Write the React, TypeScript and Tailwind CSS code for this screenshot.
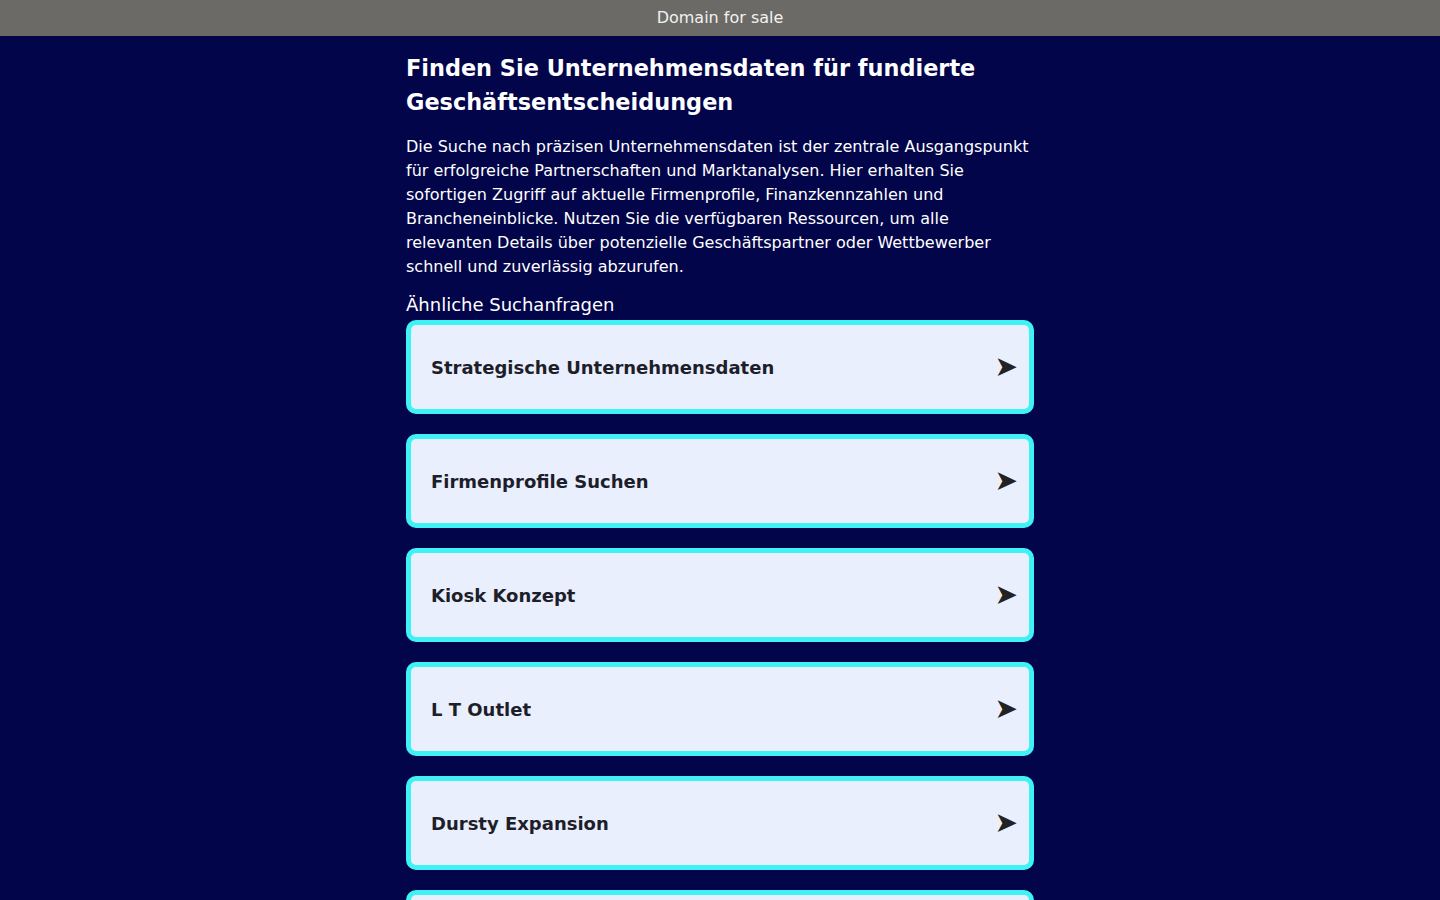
import React from "react";

const items = [
  "Strategische Unternehmensdaten",
  "Firmenprofile Suchen",
  "Kiosk Konzept",
  "L T Outlet",
  "Dursty Expansion",
  "Unternehmensanalyse",
];

export default function App() {
  return (
    <div className="min-h-screen bg-[#02054a] text-white" style={{ fontFamily: '"DejaVu Sans", sans-serif' }}>
      <div className="h-9 bg-[#6b6a66] flex items-center justify-center text-base text-[#f2f2f2]">
        Domain for sale
      </div>
      <div className="w-[628px] mx-auto pt-[15px]">
        <h1 className="text-[22.4px] font-bold leading-[34px]">
          Finden Sie Unternehmensdaten für fundierte Geschäftsentscheidungen
        </h1>
        <p className="mt-[16px] text-base leading-6">
          Die Suche nach präzisen Unternehmensdaten ist der zentrale Ausgangspunkt für erfolgreiche Partnerschaften und Marktanalysen. Hier erhalten Sie sofortigen Zugriff auf aktuelle Firmenprofile, Finanzkennzahlen und Brancheneinblicke. Nutzen Sie die verfügbaren Ressourcen, um alle relevanten Details über potenzielle Geschäftspartner oder Wettbewerber schnell und zuverlässig abzurufen.
        </p>
        <h2 className="mt-[12px] text-lg leading-[27px]">Ähnliche Suchanfragen</h2>
        <div className="mt-[2px] flex flex-col gap-[20px]">
          {items.map((t) => (
            <a
              key={t}
              href="#"
              className="flex items-center justify-between h-[94px] rounded-[10px] border-[5px] border-[#3ff2f5] bg-[#e9effd] pl-5 pr-[11px] text-[#1e1e2a]"
            >
              <span className="text-lg font-bold pt-[2px]">{t}</span>
              <span className="text-[28px] leading-none text-[#222]">➤</span>
            </a>
          ))}
        </div>
      </div>
    </div>
  );
}
